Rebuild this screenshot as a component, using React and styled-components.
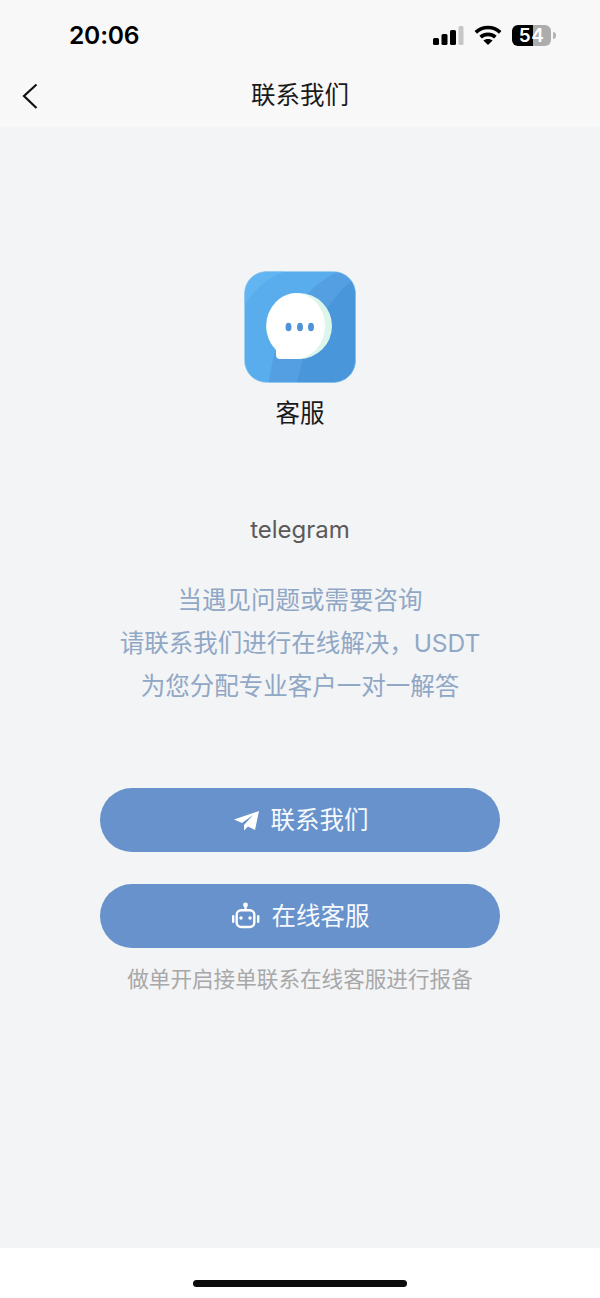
import React from "react";
import styled, { createGlobalStyle } from "styled-components";

const Global = createGlobalStyle`
  html, body { margin: 0; padding: 0; }
  body { font-family: "Noto Sans CJK SC", "Noto Sans", sans-serif; }
`;
const Page = styled.div`
  width: 600px; height: 1298px; display: flex; flex-direction: column;
  background: #f3f4f6; overflow: hidden;
`;
const Header = styled.header`
  height: 127px; flex: none; background: #f8f8f8; display: flex; flex-direction: column;
`;
const StatusBar = styled.div`
  height: 70px; display: flex; align-items: center; justify-content: space-between;
  padding: 1px 44px 0 69px; box-sizing: border-box;
`;
const Clock = styled.span`
  font: 600 24.6px/1 "Inter", "Liberation Sans", sans-serif; color: #000; letter-spacing: -0.2px;
`;
const StatusIcons = styled.div`
  display: flex; align-items: center; gap: 10px; margin-top: -1px;
`;
const Battery = styled.div`
  width: 39px; height: 21px; border-radius: 6px; display: flex;
  align-items: center; justify-content: center;
  background: linear-gradient(90deg, #000 0 54%, #adadad 54% 100%);
  font: 600 19px/21px "Inter", "Liberation Sans", sans-serif; color: #fff; letter-spacing: 0.5px;
`;
const BatteryWrap = styled.div`
  display: flex; align-items: center; gap: 2px;
`;
const BatteryTip = styled.div`
  width: 3px; height: 7px; background: #b5b5b5; border-radius: 0 3px 3px 0;
`;
const NavBar = styled.div`
  height: 57px; display: grid; grid-template-columns: 60px 1fr 60px; align-items: center;
  padding-bottom: 7px; box-sizing: border-box;
`;
const BackButton = styled.div`
  display: flex; padding-left: 22px; margin-top: 2px;
`;
const Title = styled.h1`
  margin: 0; text-align: center; font-size: 24.5px; font-weight: 400; color: #1a1a1a; line-height: 32px;
  padding-bottom: 2px;
`;
const Main = styled.main`
  flex: 1; display: flex; flex-direction: column; align-items: center; padding-top: 144px;
`;
const AppIcon = styled.div`
  width: 112px; height: 112px; display: block;
`;
const AppName = styled.div`
  margin-top: 11px; font-size: 24.5px; line-height: 36px; color: #1a1a1a;
`;
const Channel = styled.div`
  margin-top: 83px; font: 400 24px/34px "Inter", "Noto Sans", sans-serif; color: #5a5a5a;
`;
const Notice = styled.p`
  margin: 32px 0 0; text-align: center; font: 400 24.5px/43px "Inter", "Noto Sans CJK SC", sans-serif;
  color: #90a7c5;
`;
const Actions = styled.div`
  margin-top: 80px; display: flex; flex-direction: column; gap: 32px; width: 400px;
`;
const ActionButton = styled.button`
  height: 64px; border: 0; border-radius: 32px; background: #6792cc; color: #f6f9fd;
  display: flex; align-items: center; justify-content: center; gap: 11px;
  font: 400 24.5px/32px "Noto Sans CJK SC", sans-serif; padding: 0;
`;
const ButtonLabel = styled.span`
  position: relative; top: -1px;
`;
const Hint = styled.div`
  margin-top: 14px; font-size: 21.6px; line-height: 32px; color: #a8a8a8;
`;
const Footer = styled.footer`
  height: 50px; flex: none; background: #fff; display: flex; justify-content: center; padding-top: 32px; box-sizing: border-box;
`;
const HomeBar = styled.div`
  width: 214px; height: 7px; border-radius: 4px; background: #0c0c0c;
`;

const Signal = () => (
  <svg width="32" height="20" viewBox="0 0 32 20">
    <rect x="1" y="13" width="6" height="7" rx="1.5" fill="#000" />
    <rect x="9.5" y="9" width="6" height="11" rx="1.5" fill="#000" />
    <rect x="18" y="5" width="6" height="15" rx="1.5" fill="#000" />
    <rect x="26.5" y="1" width="5" height="19" rx="1.5" fill="#c6c6c6" />
  </svg>
);
const Wifi = () => (
  <svg width="28" height="20" viewBox="0 0 28 20" fill="none" stroke="#000" strokeWidth="3.6">
    <path d="M1.8 7.4C8.6 .9 19.4 .9 26.2 7.4" />
    <path d="M6.6 12.2c4.2-3.8 10.6-3.8 14.8 0" />
    <path d="M14 20l-4.6-4.6c2.6-2 6.6-2 9.2 0z" fill="#000" stroke="none" />
  </svg>
);
const Chevron = () => (
  <svg width="16" height="26" viewBox="0 0 16 26" fill="none" stroke="#111" strokeWidth="2.2">
    <path d="M14.5 1.5L2 13l12.5 12" />
  </svg>
);
const BubbleIcon = () => (
  <AppIcon as="svg" viewBox="0 0 112 112">
    <defs>
      <clipPath id="r"><rect x="0.5" y="0.5" width="111" height="111" rx="22" /></clipPath>
    </defs>
    <g clipPath="url(#r)">
      <rect width="112" height="112" fill="#5aadec" />
      <path d="M-2 39C8 20 24 6 42 0H-2z" fill="#63b5f1" />
      <path d="M25 112C30 62 56 18 95 0H112V112z" fill="#539fe2" />
      <path d="M53 112C62 66 82 30 112 6V112z" fill="#4a96da" />
    </g>
    <rect x="0.5" y="0.5" width="111" height="111" rx="22" fill="none" stroke="#9cd0f2" strokeWidth="1" opacity="0.6" />
    <circle cx="55" cy="55" r="33" fill="#dcf6ec" />
    <path d="M51.500 22a29.500 33 0 1 1 0 66H36c-2.500 0-4-1.500-4-4v-5A29.500 33 0 0 1 51.500 22z" fill="#fff" />
    <ellipse cx="44.500" cy="56" rx="3" ry="4.300" fill="#4f94d8" />
    <ellipse cx="56" cy="56" rx="3" ry="4.300" fill="#4f94d8" />
    <ellipse cx="67" cy="56" rx="3" ry="4.300" fill="#4f94d8" />
  </AppIcon>
);
const Plane = () => (
  <svg width="28" height="24" viewBox="0 0 28 24" fill="#fff">
    <path d="M27 3L2 11.500l8 3.500L21 7 12 17v5.500l4-4 7 3.500z" />
  </svg>
);
const Bot = () => (
  <svg width="30" height="30" viewBox="0 0 30 30" fill="none" stroke="#fff" strokeWidth="2.4">
    <circle cx="14.500" cy="4" r="2.400" fill="#fff" stroke="none" />
    <path d="M14.500 5v4" />
    <rect x="5.700" y="9.200" width="17.600" height="16.800" rx="4.500" />
    <circle cx="10" cy="17" r="1.700" fill="#fff" stroke="none" />
    <circle cx="19" cy="17" r="1.700" fill="#fff" stroke="none" />
    <rect x="1" y="14" width="2.400" height="8" rx="1.200" fill="#fff" stroke="none" />
    <rect x="26" y="14" width="2.400" height="8" rx="1.200" fill="#fff" stroke="none" />
  </svg>
);

export default function App() {
  return (
    <Page>
      <Global />
      <Header>
        <StatusBar>
          <Clock>20:06</Clock>
          <StatusIcons>
            <Signal />
            <Wifi />
            <BatteryWrap>
              <Battery>54</Battery>
              <BatteryTip />
            </BatteryWrap>
          </StatusIcons>
        </StatusBar>
        <NavBar>
          <BackButton><Chevron /></BackButton>
          <Title>联系我们</Title>
        </NavBar>
      </Header>
      <Main>
        <BubbleIcon />
        <AppName>客服</AppName>
        <Channel>telegram</Channel>
        <Notice>
          当遇见问题或需要咨询<br />
          请联系我们进行在线解决，USDT<br />
          为您分配专业客户一对一解答
        </Notice>
        <Actions>
          <ActionButton><Plane /><ButtonLabel>联系我们</ButtonLabel></ActionButton>
          <ActionButton><Bot /><ButtonLabel>在线客服</ButtonLabel></ActionButton>
        </Actions>
        <Hint>做单开启接单联系在线客服进行报备</Hint>
      </Main>
      <Footer><HomeBar /></Footer>
    </Page>
  );
}
